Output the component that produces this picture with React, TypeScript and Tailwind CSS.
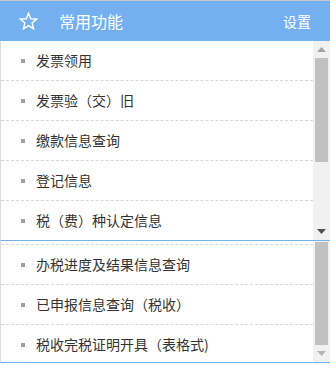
const topItems = ['发票领用', '发票验（交）旧', '缴款信息查询', '登记信息', '税（费）种认定信息'];
const bottomItems = ['办税进度及结果信息查询', '已申报信息查询（税收）', '税收完税证明开具（表格式)'];

function Arrow({ up, color }: { up?: boolean; color: string }) {
  return (
    <svg width="9" height="5" viewBox="0 0 9 5" className="block">
      <polygon points={up ? '0,5 9,5 4.5,0' : '0,0 9,0 4.5,5'} fill={color} />
    </svg>
  );
}

function Row({ label }: { label: string }) {
  return (
    <div className="flex h-[40px] shrink-0 items-center border-b border-dashed border-[#d6d6d6] pl-[20px]">
      <span className="h-[4px] w-[4px] bg-[#a0a0a0]" />
      <span className="ml-[11px] text-[14px] text-[#333]">{label}</span>
    </div>
  );
}

export default function App() {
  return (
    <div className="h-[365px] w-[330px] bg-white font-['Noto_Sans_CJK_SC','Noto_Sans',sans-serif]">
      <div className="border-t border-[#c8c8c8]">
        {/* 标题栏 */}
        <div className="flex h-[40px] items-center bg-[#74b0ef] pl-[19px] pr-[19px] text-white">
          <svg width="19" height="18" viewBox="0 0 24 23" fill="none" stroke="white" strokeWidth="1.8" strokeLinejoin="miter">
            <polygon points="12,1.5 14.9,8.6 22.5,9.1 16.6,14 18.5,21.5 12,17.4 5.5,21.5 7.4,14 1.5,9.1 9.1,8.6" />
          </svg>
          <span className="ml-[21px] text-[16px]">常用功能</span>
          <span className="ml-auto text-[14px]">设置</span>
        </div>

        {/* 第一块 */}
        <div className="flex h-[200px] border-b border-l border-b-[#74b0ef] border-l-[#dcdcdc]">
          <div className="flex flex-1 flex-col overflow-hidden">
            {topItems.map((item) => (
              <Row key={item} label={item} />
            ))}
          </div>
          <div className="flex w-[17px] flex-col bg-[#f1f1f1]">
            <div className="flex h-[17px] items-center justify-center">
              <Arrow up color="#a3a3a3" />
            </div>
            <div className="mx-[2px] h-[104px] bg-[#c1c1c1]" />
            <div className="flex-1" />
            <div className="flex h-[17px] items-center justify-center">
              <Arrow color="#505050" />
            </div>
          </div>
        </div>

        {/* 第二块 */}
        <div className="flex h-[122px] border-b border-l border-b-[#74b0ef] border-l-[#dcdcdc]">
          <div className="flex flex-1 flex-col overflow-hidden">
            <div className="h-[4px] shrink-0 border-b border-dashed border-[#d6d6d6]" />
            {bottomItems.map((item) => (
              <Row key={item} label={item} />
            ))}
          </div>
          <div className="flex w-[17px] flex-col bg-[#f1f1f1]">
            <div className="mx-[2px] mt-[1px] h-[103px] bg-[#c1c1c1]" />
            <div className="flex-1" />
            <div className="flex h-[17px] items-center justify-center">
              <Arrow color="#b4b4b4" />
            </div>
          </div>
        </div>
      </div>
    </div>
  );
}
